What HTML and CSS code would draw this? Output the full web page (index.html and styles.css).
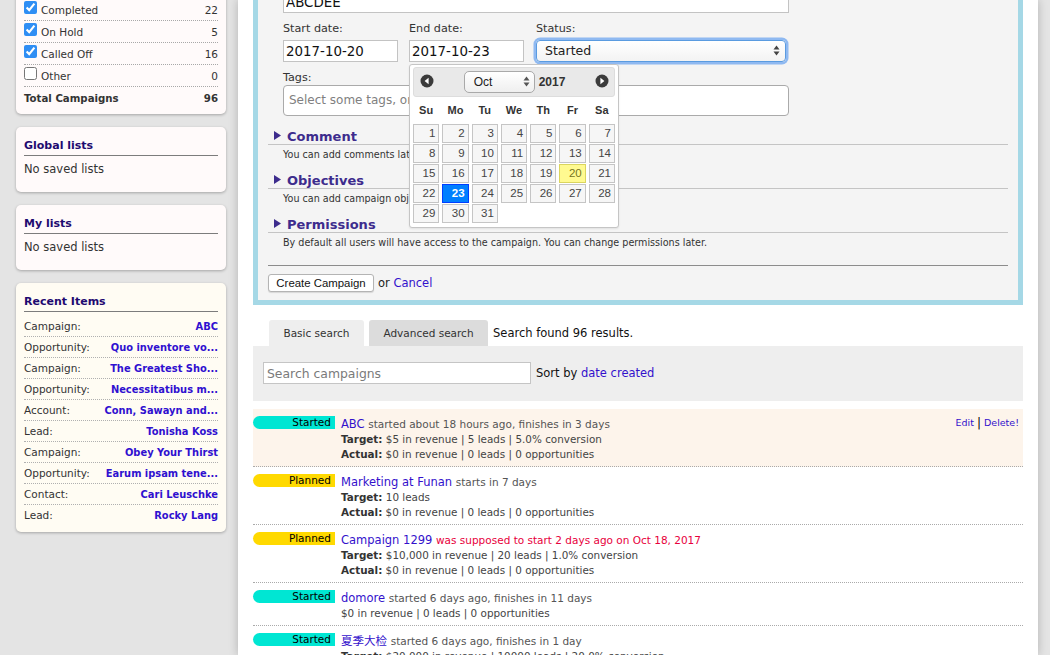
FILE: index.html
```html
<!DOCTYPE html>
<html lang="en">
<head>
<meta charset="utf-8">
<title>Campaigns</title>
<link rel="stylesheet" href="styles.css">
</head>
<body>
<div class="page">
  <aside class="sidebar">
    <div class="box status-box">
      <div class="box-title">Campaign Statuses</div>
      <div class="check-row"><label><input type="checkbox" checked> Planned</label><span class="count">37</span></div>
      <div class="check-row"><label><input type="checkbox" checked> Started</label><span class="count">16</span></div>
      <div class="check-row"><label><input type="checkbox" checked> Completed</label><span class="count">22</span></div>
      <div class="check-row"><label><input type="checkbox" checked> On Hold</label><span class="count">5</span></div>
      <div class="check-row"><label><input type="checkbox" checked> Called Off</label><span class="count">16</span></div>
      <div class="check-row"><label><input type="checkbox"> Other</label><span class="count">0</span></div>
      <div class="check-row total"><span>Total Campaigns</span><span class="count">96</span></div>
    </div>
    <div class="box">
      <div class="box-title">Global lists</div>
      <div class="box-text">No saved lists</div>
    </div>
    <div class="box">
      <div class="box-title">My lists</div>
      <div class="box-text">No saved lists</div>
    </div>
    <div class="box recent">
      <div class="box-title">Recent Items</div>
      <div class="recent-row"><span>Campaign:</span><a href="#">ABC</a></div>
      <div class="recent-row"><span>Opportunity:</span><a href="#">Quo inventore vo...</a></div>
      <div class="recent-row"><span>Campaign:</span><a href="#">The Greatest Sho...</a></div>
      <div class="recent-row"><span>Opportunity:</span><a href="#">Necessitatibus m...</a></div>
      <div class="recent-row"><span>Account:</span><a href="#">Conn, Sawayn and...</a></div>
      <div class="recent-row"><span>Lead:</span><a href="#">Tonisha Koss</a></div>
      <div class="recent-row"><span>Campaign:</span><a href="#">Obey Your Thirst</a></div>
      <div class="recent-row"><span>Opportunity:</span><a href="#">Earum ipsam tene...</a></div>
      <div class="recent-row"><span>Contact:</span><a href="#">Cari Leuschke</a></div>
      <div class="recent-row"><span>Lead:</span><a href="#">Rocky Lang</a></div>
    </div>
  </aside>

  <main class="main">
    <form class="create-form">
      <div class="fields">
        <div class="field-row">
          <div class="field">
            <div class="label">Name:</div>
            <input class="text-input name-input" type="text" value="ABCDEE">
          </div>
        </div>
        <div class="field-row three">
          <div class="field">
            <div class="label">Start date:</div>
            <input class="text-input date-input" type="text" value="2017-10-20">
          </div>
          <div class="field picker-anchor">
            <div class="label">End date:</div>
            <input class="text-input date-input" type="text" value="2017-10-23">
            <div class="datepicker">
              <div class="dp-header">
                <svg class="dp-nav" width="14" height="14" viewBox="0 0 14 14"><circle cx="7" cy="7" r="6.5" fill="#3b3b3b"/><path d="M8.6 3.8 L4.6 7 L8.6 10.2 Z" fill="#fff"/></svg>
                <div class="dp-title">
                  <div class="dp-month">Oct
                    <svg class="arrows" width="7" height="11" viewBox="0 0 7 11"><path d="M3.5 0.5 L6.5 4.5 L0.5 4.5 Z M3.5 10.5 L6.5 6.5 L0.5 6.5 Z" fill="#555"/></svg>
                  </div>
                  <span class="dp-year">2017</span>
                </div>
                <svg class="dp-nav" width="14" height="14" viewBox="0 0 14 14"><circle cx="7" cy="7" r="6.5" fill="#3b3b3b"/><path d="M5.4 3.8 L9.4 7 L5.4 10.2 Z" fill="#fff"/></svg>
              </div>
              <div class="dp-grid">
                <span class="dow">Su</span><span class="dow">Mo</span><span class="dow">Tu</span><span class="dow">We</span><span class="dow">Th</span><span class="dow">Fr</span><span class="dow">Sa</span>
                <span class="day">1</span><span class="day">2</span><span class="day">3</span><span class="day">4</span><span class="day">5</span><span class="day">6</span><span class="day">7</span>
                <span class="day">8</span><span class="day">9</span><span class="day">10</span><span class="day">11</span><span class="day">12</span><span class="day">13</span><span class="day">14</span>
                <span class="day">15</span><span class="day">16</span><span class="day">17</span><span class="day">18</span><span class="day">19</span><span class="day today">20</span><span class="day">21</span>
                <span class="day">22</span><span class="day active">23</span><span class="day">24</span><span class="day">25</span><span class="day">26</span><span class="day">27</span><span class="day">28</span>
                <span class="day">29</span><span class="day">30</span><span class="day">31</span>
              </div>
            </div>
          </div>
          <div class="field">
            <div class="label">Status:</div>
            <div class="select focused">Started
              <svg class="arrows" width="7" height="11" viewBox="0 0 7 11"><path d="M3.5 0.5 L6.5 4.5 L0.5 4.5 Z M3.5 10.5 L6.5 6.5 L0.5 6.5 Z" fill="#444"/></svg>
            </div>
          </div>
        </div>
        <div class="field-row">
          <div class="field">
            <div class="label tight">Tags:</div>
            <div class="tags-input">Select some tags, or add new ones</div>
          </div>
        </div>
      </div>

      <div class="sections">
        <div class="section">
          <div class="section-title"><svg width="7" height="9" viewBox="0 0 7 9"><path d="M0 0 L7 4.5 L0 9 Z" fill="#3d2c8d"/></svg><span>Comment</span></div>
          <div class="section-note">You can add comments later.</div>
        </div>
        <div class="section">
          <div class="section-title"><svg width="7" height="9" viewBox="0 0 7 9"><path d="M0 0 L7 4.5 L0 9 Z" fill="#3d2c8d"/></svg><span>Objectives</span></div>
          <div class="section-note">You can add campaign objectives later.</div>
        </div>
        <div class="section">
          <div class="section-title"><svg width="7" height="9" viewBox="0 0 7 9"><path d="M0 0 L7 4.5 L0 9 Z" fill="#3d2c8d"/></svg><span>Permissions</span></div>
          <div class="section-note">By default all users will have access to the campaign. You can change permissions later.</div>
        </div>
      </div>

      <div class="form-actions">
        <button type="button" class="btn">Create Campaign</button>
        <span class="or">or <a href="#">Cancel</a></span>
      </div>
    </form>

    <div class="tabs">
      <div class="tab active">Basic search</div>
      <div class="tab">Advanced search</div>
      <div class="found">Search found 96 results.</div>
    </div>
    <div class="search-panel">
      <input class="search-input" type="text" placeholder="Search campaigns">
      <span class="sort">Sort by <a href="#">date created</a></span>
    </div>

    <ul class="campaigns">
      <li class="campaign highlight">
        <span class="badge started">Started</span>
        <div class="campaign-body">
          <div class="campaign-title"><a href="#">ABC</a> <span class="muted">started about 18 hours ago, finishes in 3 days</span></div>
          <div class="campaign-line"><b>Target:</b> $5 in revenue | 5 leads | 5.0% conversion</div>
          <div class="campaign-line"><b>Actual:</b> $0 in revenue | 0 leads | 0 opportunities</div>
        </div>
        <div class="tools"><a href="#">Edit</a><span class="sep">|</span><a href="#">Delete!</a></div>
      </li>
      <li class="campaign">
        <span class="badge planned">Planned</span>
        <div class="campaign-body">
          <div class="campaign-title"><a href="#">Marketing at Funan</a> <span class="muted">starts in 7 days</span></div>
          <div class="campaign-line"><b>Target:</b> 10 leads</div>
          <div class="campaign-line"><b>Actual:</b> $0 in revenue | 0 leads | 0 opportunities</div>
        </div>
      </li>
      <li class="campaign">
        <span class="badge planned">Planned</span>
        <div class="campaign-body">
          <div class="campaign-title"><a href="#">Campaign 1299</a> <span class="warn">was supposed to start 2 days ago on Oct 18, 2017</span></div>
          <div class="campaign-line"><b>Target:</b> $10,000 in revenue | 20 leads | 1.0% conversion</div>
          <div class="campaign-line"><b>Actual:</b> $0 in revenue | 0 leads | 0 opportunities</div>
        </div>
      </li>
      <li class="campaign">
        <span class="badge started">Started</span>
        <div class="campaign-body">
          <div class="campaign-title"><a href="#">domore</a> <span class="muted">started 6 days ago, finishes in 11 days</span></div>
          <div class="campaign-line">$0 in revenue | 0 leads | 0 opportunities</div>
        </div>
      </li>
      <li class="campaign">
        <span class="badge started">Started</span>
        <div class="campaign-body">
          <div class="campaign-title"><a href="#">夏季大检</a> <span class="muted">started 6 days ago, finishes in 1 day</span></div>
          <div class="campaign-line"><b>Target:</b> $20,000 in revenue | 10000 leads | 20.0% conversion</div>
          <div class="campaign-line"><b>Actual:</b> $0 in revenue | 0 leads | 0 opportunities</div>
        </div>
      </li>
    </ul>
  </main>
</div>
</body>
</html>
```

FILE: styles.css
```css
* { box-sizing: border-box; }

html, body {
  margin: 0;
  padding: 0;
  height: 655px;
  overflow: hidden;
}

body {
  background: #e4e4e4;
  font-family: "DejaVu Sans", "Noto Sans CJK SC", sans-serif;
  color: #333;
}

a { color: #3311cc; text-decoration: none; }

.page {
  display: flex;
  align-items: flex-start;
  height: 655px;
  overflow: hidden;
}

/* ---------- sidebar ---------- */
.sidebar {
  width: 238px;
  flex: none;
  padding-left: 16px;
  display: flex;
  flex-direction: column;
  gap: 13px;
}

.box {
  width: 210px;
  background: #fffafa;
  border-radius: 5px;
  box-shadow: 0 1px 3px rgba(0, 0, 0, 0.28);
  padding: 10px 8px 13px;
}

.status-box {
  margin-top: -78px;
  padding-bottom: 5px;
}

.box-title {
  font-size: 11px;
  font-weight: bold;
  line-height: 18px;
  color: #1e0a70;
  border-bottom: 1px solid #7c7c7c;
  margin-bottom: 3px;
}

.status-box .box-title { margin-bottom: 4px; }

.box-text {
  font-size: 11.5px;
  line-height: 20px;
  color: #333;
}

.check-row {
  display: flex;
  justify-content: space-between;
  align-items: center;
  height: 22px;
  border-bottom: 1px dotted #a8a8a8;
  font-size: 10.5px;
  color: #333;
}

.check-row label {
  display: flex;
  align-items: center;
}

.check-row input {
  width: 13px;
  height: 13px;
  margin: -4px 4px 0 0;
  accent-color: #2f8ef4;
}

.check-row.total {
  border-bottom: none;
  height: 22px;
  font-weight: bold;
  font-size: 10.2px;
}

.recent {
  background: #fffcf3;
  padding-bottom: 7px;
}

.recent .box-title { margin-bottom: 4px; }

.recent-row {
  display: flex;
  justify-content: space-between;
  align-items: center;
  height: 21px;
  border-bottom: 1px dotted #b0b0b0;
  font-size: 10.5px;
}

.recent-row:last-child { border-bottom: none; height: 20px; }

.recent-row a {
  font-weight: bold;
  font-size: 9.9px;
  color: #2f10d0;
}

/* ---------- main ---------- */
.main {
  width: 800px;
  flex: none;
  height: 655px;
  background: #fff;
  padding: 0 15px;
  box-shadow: 0 0 9px rgba(0, 0, 0, 0.22);
}

.create-form {
  margin: -43px 0 0;
  border: 5px solid #a5d8e6;
  background: #f4f4f4;
  padding: 10px 10px 8px;
}

.fields { padding-left: 15px; }

.field-row { padding-bottom: 8px; }
.field-row:last-child { padding-bottom: 0; }

.field-row.three {
  display: grid;
  grid-template-columns: 115px 116px 250px;
  column-gap: 11px;
}

.label {
  font-size: 11.2px;
  line-height: 16px;
  margin-bottom: 3px;
  color: #333;
}

.label.tight { margin-bottom: -1px; }

.text-input {
  display: block;
  height: 22px;
  border: 1px solid #c3c3c3;
  background: #fff;
  font-family: "DejaVu Sans", sans-serif;
  font-size: 13.4px;
  color: #111;
  padding: 0 2px;
  margin: 0;
  outline: none;
}

.name-input { width: 506px; }
.date-input { width: 115px; }

.select {
  position: relative;
  height: 22px;
  width: 250px;
  border: 1px solid #5a9be0;
  border-radius: 4px;
  background: linear-gradient(#ffffff, #f3f3f3);
  box-shadow: 0 0 0 2.5px rgba(110, 165, 240, 0.75);
  font-size: 12.5px;
  line-height: 20px;
  padding-left: 8px;
  color: #222;
}

.select .arrows {
  position: absolute;
  right: 5px;
  top: 4px;
}

.tags-input {
  width: 506px;
  height: 31px;
  border: 1px solid #aaa;
  border-radius: 4px;
  background: #fff;
  font-size: 12px;
  line-height: 29px;
  padding-left: 5px;
  color: #808080;
}

/* datepicker overlay */
.picker-anchor { position: relative; }

.datepicker {
  position: absolute;
  left: 0;
  top: 43px;
  z-index: 5;
  width: 210px;
  background: #fff;
  border: 1px solid #c5c5c5;
  border-radius: 3px;
  padding: 2px 3px 4px;
  font-family: "Liberation Sans", Arial, sans-serif;
  box-shadow: 0 1px 2px rgba(0, 0, 0, 0.08);
}

.dp-header {
  height: 30px;
  background: #e9e9e9;
  border: 1px solid #dddddd;
  border-radius: 3px;
  display: flex;
  align-items: center;
  justify-content: space-between;
  padding: 0 5px 2px 6px;
}

.dp-title {
  display: flex;
  align-items: center;
  gap: 4px;
  padding-top: 2px;
}

.dp-month {
  position: relative;
  width: 71px;
  height: 22px;
  border: 1px solid #a9a9a9;
  border-radius: 5px;
  background: linear-gradient(#ffffff, #efefef);
  font-size: 12px;
  line-height: 20px;
  padding-left: 9px;
  color: #222;
}

.dp-month .arrows {
  position: absolute;
  right: 4px;
  top: 4px;
}

.dp-year {
  font-size: 12px;
  font-weight: bold;
  color: #333;
}

.dp-grid {
  display: grid;
  grid-template-columns: repeat(7, 1fr);
  column-gap: 3px;
  row-gap: 1px;
}

.dow {
  text-align: center;
  font-size: 11px;
  font-weight: bold;
  color: #333;
  line-height: 20px;
  padding: 3px 0 3px;
}

.day {
  height: 19px;
  border: 1px solid #c5c5c5;
  background: #f6f6f6;
  color: #454545;
  font-size: 11.5px;
  line-height: 17px;
  text-align: right;
  padding-right: 3px;
}

.day.today {
  background: #fffa90;
  border-color: #dad55e;
  color: #777620;
}

.day.active {
  background: #007fff;
  border-color: #003eff;
  color: #fff;
  font-weight: bold;
}

/* sections */
.sections { margin-top: 11px; }

.section { margin-bottom: 7px; }

.section-title {
  display: flex;
  align-items: center;
  gap: 6px;
  height: 18px;
  padding-left: 6px;
  border-bottom: 1px solid #c4c4c4;
  color: #3d2c8d;
  font-size: 13px;
  font-weight: bold;
}

.section-title span { position: relative; top: 1px; }

.section-note {
  padding: 2px 15px;
  font-size: 9.6px;
  line-height: 15px;
  color: #333;
}

.form-actions {
  margin-top: 13px;
  border-top: 1px solid #8c8c8c;
  padding-top: 8px;
  display: flex;
  align-items: center;
  gap: 4px;
}

.btn {
  height: 18px;
  width: 106px;
  padding: 0;
  border: 1px solid #b4b4b4;
  border-radius: 3px;
  background: #fff;
  font-family: "Liberation Sans", Arial, sans-serif;
  font-size: 11.4px;
  color: #111;
  box-shadow: 0 1px 1px rgba(0, 0, 0, 0.12);
}

.or {
  font-size: 11.5px;
  color: #222;
}

.or a { color: #3311cc; }

/* tabs & search */
.tabs {
  display: flex;
  align-items: flex-end;
  margin-top: 15px;
  padding-left: 16px;
  height: 26px;
}

.tab {
  height: 26px;
  line-height: 26px;
  font-size: 10.5px;
  color: #333;
  text-align: center;
  border-radius: 3px 3px 0 0;
  background: #dcdcdc;
  width: 119px;
  margin-right: 5px;
}

.tab.active {
  background: #eeeeee;
  width: 95px;
}

.found {
  font-size: 11.5px;
  line-height: 26px;
  color: #111;
}

.search-panel {
  background: #eeeeee;
  height: 55px;
  padding: 16px 10px 0;
  display: flex;
  align-items: flex-start;
  gap: 5px;
}

.search-input {
  width: 268px;
  height: 22px;
  margin: 0;
  border: 1px solid #c5c5c5;
  background: #fff;
  font-family: "DejaVu Sans", sans-serif;
  font-size: 12.4px;
  padding: 0 3px;
  outline: none;
}

.search-input::placeholder { color: #7a7a7a; }

.sort {
  font-size: 11.5px;
  line-height: 23px;
  color: #111;
}

/* campaign list */
.campaigns {
  list-style: none;
  margin: 8px 0 0;
  padding: 0;
}

.campaign {
  display: flex;
  align-items: flex-start;
  padding: 7px 4px 4px 0;
  border-bottom: 1px dotted #aaaaaa;
}

.campaign.highlight { background: #fdf4eb; }

.badge {
  flex: none;
  width: 82px;
  height: 13px;
  margin-right: 6px;
  border-radius: 7px 0 0 7px;
  font-size: 10.5px;
  line-height: 13px;
  text-align: right;
  padding-right: 4px;
  color: #000;
}

.badge.started { background: #00e6d3; }
.badge.planned { background: #ffd900; }

.campaign-body { flex: 1; }

.campaign-title {
  font-size: 11.5px;
  line-height: 16px;
}

.campaign-title a { color: #3311cc; }

.muted {
  font-size: 10.5px;
  color: #555;
}

.warn {
  font-size: 10.5px;
  color: #e8003c;
}

.campaign-line {
  font-size: 10.4px;
  line-height: 15px;
  color: #444;
}

.campaign-line b { color: #333; }

.tools {
  font-size: 9.5px;
  line-height: 14px;
  display: flex;
  align-items: center;
  gap: 3px;
}

.tools .sep { color: #000; font-size: 12px; }
```
